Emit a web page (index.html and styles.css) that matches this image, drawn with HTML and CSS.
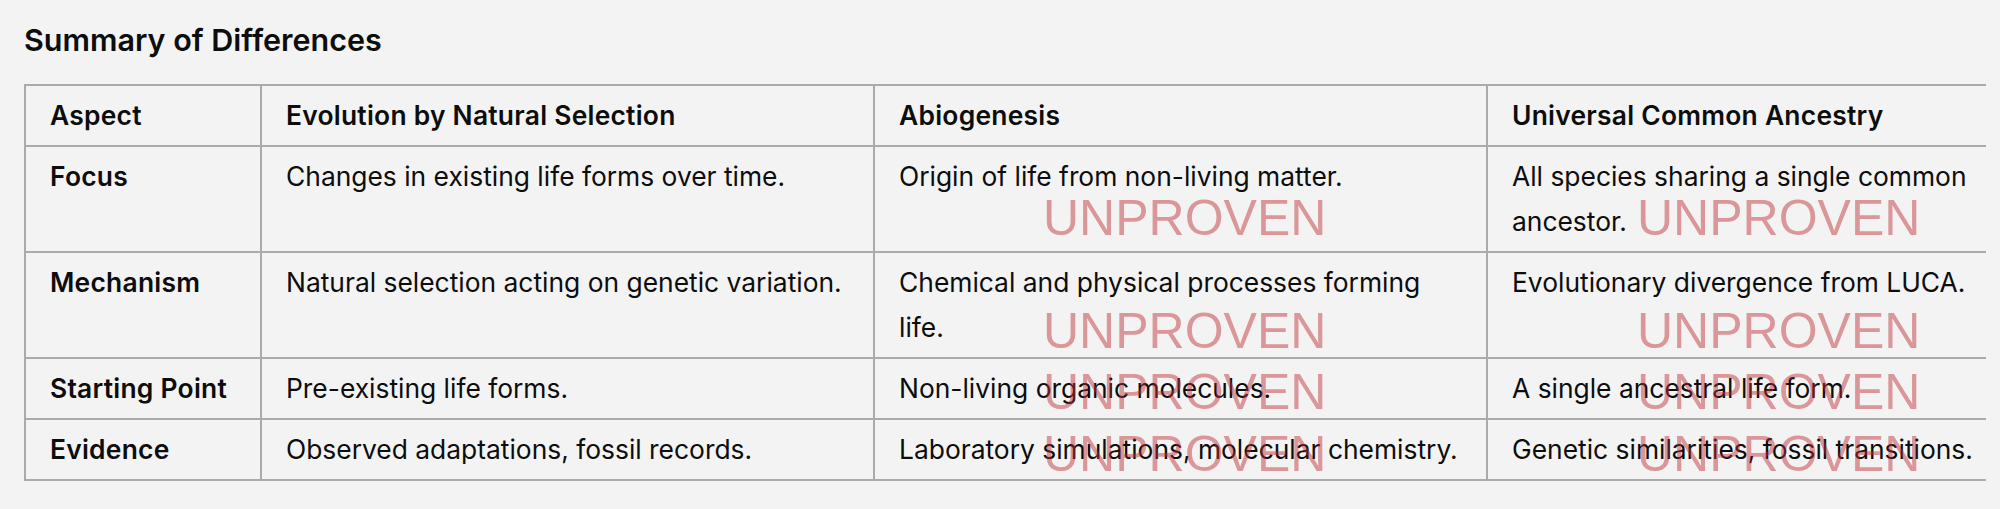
FILE: index.html
```html
<!DOCTYPE html>
<html lang="en">
<head>
<meta charset="utf-8">
<title>Summary of Differences</title>
<link rel="stylesheet" href="styles.css">
</head>
<body>
<main class="page">
  <h3 class="title">Summary of Differences</h3>
  <div class="table-wrap">
    <table class="diff">
      <colgroup>
        <col class="c-aspect">
        <col class="c-evo">
        <col class="c-abio">
        <col class="c-uca">
      </colgroup>
      <thead>
        <tr>
          <th>Aspect</th>
          <th>Evolution by Natural Selection</th>
          <th>Abiogenesis</th>
          <th>Universal Common Ancestry</th>
        </tr>
      </thead>
      <tbody>
        <tr class="r-focus">
          <td class="key">Focus</td>
          <td>Changes in existing life forms over time.</td>
          <td class="stamped">Origin of life from non-living matter.<span class="stamp stamp-abio">UNPROVEN</span></td>
          <td class="stamped">All species sharing a single common ancestor.<span class="stamp stamp-uca">UNPROVEN</span></td>
        </tr>
        <tr class="r-mech">
          <td class="key">Mechanism</td>
          <td>Natural selection acting on genetic variation.</td>
          <td class="stamped">Chemical and physical processes forming life.<span class="stamp stamp-abio">UNPROVEN</span></td>
          <td class="stamped">Evolutionary divergence from LUCA.<span class="stamp stamp-uca">UNPROVEN</span></td>
        </tr>
        <tr class="r-start">
          <td class="key">Starting Point</td>
          <td>Pre-existing life forms.</td>
          <td class="stamped">Non-living organic molecules.<span class="stamp stamp-abio">UNPROVEN</span></td>
          <td class="stamped">A single ancestral life form.<span class="stamp stamp-uca">UNPROVEN</span></td>
        </tr>
        <tr class="r-evid">
          <td class="key">Evidence</td>
          <td>Observed adaptations, fossil records.</td>
          <td class="stamped">Laboratory simulations, molecular chemistry.<span class="stamp stamp-abio">UNPROVEN</span></td>
          <td class="stamped">Genetic similarities, fossil transitions.<span class="stamp stamp-uca">UNPROVEN</span></td>
        </tr>
      </tbody>
    </table>
  </div>
</main>
</body>
</html>
```

FILE: styles.css
```css
html, body {
  margin: 0;
  padding: 0;
  background: #f3f3f3;
}

body {
  font-family: Inter, "Noto Sans", "Liberation Sans", sans-serif;
  color: #0d0d0d;
}

.page {
  padding: 0 0 0 24px;
}

.title {
  margin: 0;
  padding-top: 22px;
  font-size: 30.5px;
  line-height: 36px;
  font-weight: 600;
}

.table-wrap {
  margin-top: 26px;
  width: 1962px;
  overflow: hidden;
}

.diff {
  border-collapse: collapse;
  table-layout: fixed;
  width: 2002px;
  font-size: 26.4px;
  line-height: 45px;
}

.c-aspect { width: 236px; }
.c-evo { width: 613px; }
.c-abio { width: 613px; }
.c-uca { width: 540px; }

.diff th,
.diff td {
  border: 2px solid #aaaaaa;
  padding: 7px 24px;
  text-align: left;
  vertical-align: top;
}

.diff tr > :last-child {
  border-right: none;
}

.diff th {
  font-weight: 600;
  letter-spacing: 0.25px;
}

.diff td.key {
  font-weight: 600;
  letter-spacing: 0.25px;
}

.diff td.stamped {
  position: relative;
}

.stamp {
  position: absolute;
  font-family: "Liberation Sans", Arial, sans-serif;
  font-size: 50px;
  line-height: 50px;
  font-weight: 400;
  letter-spacing: 0;
  color: rgba(190, 45, 50, 0.47);
  white-space: nowrap;
  pointer-events: none;
}

.stamp-abio { left: 168px; }
.stamp-uca { left: 149px; }

.r-focus .stamp { top: 46px; }
.r-mech .stamp { top: 53px; }
.r-start .stamp { top: 8px; }
.r-evid .stamp { top: 9px; }
```
